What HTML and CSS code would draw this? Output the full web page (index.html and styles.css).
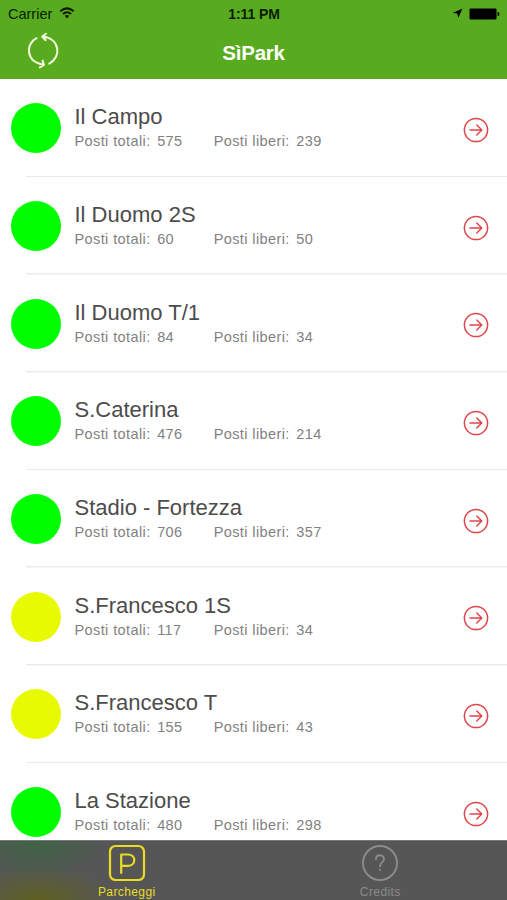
FILE: index.html
```
<!DOCTYPE html>
<html lang="it">
<head>
<meta charset="utf-8">
<title>SìPark</title>
<link rel="stylesheet" href="styles.css">
</head>
<body>
<svg class="defs" width="0" height="0" aria-hidden="true">
  <symbol id="go" viewBox="0 0 26 26">
    <circle cx="13" cy="13" r="11.6"/>
    <path d="M7 13H18.6M13.8 8L18.8 13L13.8 18"/>
  </symbol>
</svg>
<div class="app">
  <header class="header">
    <div class="status">
      <div class="carrier">
        <span>Carrier</span>
        <svg class="wifi" width="16" height="12" viewBox="0 0 16 12">
          <path d="M1.3 4.3Q8 -1.6 14.7 4.3M3.9 7Q8 3.4 12.1 7"/>
          <path class="solid" d="M5.7 8.8Q8 7 10.3 8.8L8 11.4Z"/>
        </svg>
      </div>
      <span class="clock">1:11 PM</span>
      <div class="indicators">
        <svg width="11" height="11" viewBox="0 0 11 11"><path d="M10.5 .5L6.2 10L5.4 5.6L.6 5Z"/></svg>
        <svg width="31" height="12" viewBox="0 0 31 12"><rect x=".5" y=".5" width="27" height="11" rx="1"/><path d="M28.5 4Q30.5 4 30.5 6T28.5 8Z"/></svg>
      </div>
    </div>
    <div class="navbar">
      <svg class="refresh" width="34" height="38" viewBox="0 0 34 38">
        <path d="M10.6 6.2C-.8 11.5 -.5 30 17.6 32.8M16.6 28.6L18 32.8L13.8 35.4M23.2 31.6C35.5 25.5 34.5 6.5 16.6 4.6M20 1.8L16.2 4.5L19.6 8.2"/>
      </svg>
      <h1 class="title">SìPark</h1>
    </div>
  </header>
  <main class="list">
    <div class="row"><i class="dot"></i><div class="info"><h2>Il Campo</h2><p><span class="label">Posti totali:</span><span class="total">575</span><span class="label">Posti liberi:</span><span>239</span></p></div><svg class="go"><use href="#go"/></svg></div>
    <div class="row"><i class="dot"></i><div class="info"><h2>Il Duomo 2S</h2><p><span class="label">Posti totali:</span><span class="total">60</span><span class="label">Posti liberi:</span><span>50</span></p></div><svg class="go"><use href="#go"/></svg></div>
    <div class="row"><i class="dot"></i><div class="info"><h2>Il Duomo T/1</h2><p><span class="label">Posti totali:</span><span class="total">84</span><span class="label">Posti liberi:</span><span>34</span></p></div><svg class="go"><use href="#go"/></svg></div>
    <div class="row"><i class="dot"></i><div class="info"><h2>S.Caterina</h2><p><span class="label">Posti totali:</span><span class="total">476</span><span class="label">Posti liberi:</span><span>214</span></p></div><svg class="go"><use href="#go"/></svg></div>
    <div class="row"><i class="dot"></i><div class="info"><h2>Stadio - Fortezza</h2><p><span class="label">Posti totali:</span><span class="total">706</span><span class="label">Posti liberi:</span><span>357</span></p></div><svg class="go"><use href="#go"/></svg></div>
    <div class="row"><i class="dot busy"></i><div class="info"><h2>S.Francesco 1S</h2><p><span class="label">Posti totali:</span><span class="total">117</span><span class="label">Posti liberi:</span><span>34</span></p></div><svg class="go"><use href="#go"/></svg></div>
    <div class="row"><i class="dot busy"></i><div class="info"><h2>S.Francesco T</h2><p><span class="label">Posti totali:</span><span class="total">155</span><span class="label">Posti liberi:</span><span>43</span></p></div><svg class="go"><use href="#go"/></svg></div>
    <div class="row"><i class="dot"></i><div class="info"><h2>La Stazione</h2><p><span class="label">Posti totali:</span><span class="total">480</span><span class="label">Posti liberi:</span><span>298</span></p></div><svg class="go"><use href="#go"/></svg></div>
  </main>
  <nav class="tabs">
    <div class="tab active">
      <svg width="38" height="38" viewBox="0 0 38 38"><rect x="2" y="2" width="34" height="34" rx="5.5"/><path d="M13.2 29V10.5H20C28.3 10.5 28.3 21.8 20 21.8H13.2"/></svg>
      <span>Parcheggi</span>
    </div>
    <div class="tab">
      <svg width="38" height="38" viewBox="0 0 38 38"><circle cx="19" cy="19" r="17"/><path d="M15 15.3C15 10 23 10 23 15.1C23 18.3 19 18.5 19 22.2M19 25.8V26"/></svg>
      <span>Credits</span>
    </div>
  </nav>
</div>
</body>
</html>
```
FILE: styles.css
```
* { box-sizing: border-box; }
body {
  margin: 0;
  background: #fff;
  font-family: "Liberation Sans", Arial, sans-serif;
}
h1, h2, p { margin: 0; font-weight: normal; }
svg { display: block; fill: none; stroke-linecap: round; stroke-linejoin: round; }
.defs { position: absolute; }
.app {
  width: 507px;
  height: 900px;
  display: flex;
  flex-direction: column;
  overflow: hidden;
}
.header { height: 79px; flex: none; background: #58ab1e; }
.status {
  height: 27px;
  padding: 1px 7px 0 8px;
  display: grid;
  grid-template-columns: 1fr auto 1fr;
  align-items: center;
  color: #0c1c04;
  font-size: 14.5px;
}
.carrier { display: flex; align-items: center; gap: 7px; }
.wifi { stroke: #0c1c04; stroke-width: 2; stroke-linecap: butt; margin-top: -2px; }
.wifi .solid { fill: #0c1c04; stroke: none; }
.clock { font-size: 14px; font-weight: bold; letter-spacing: -.1px; }
.indicators { display: flex; justify-content: flex-end; align-items: center; gap: 6px; }
.indicators svg { fill: #000; margin-top: -1px; }
.navbar {
  height: 52px;
  padding: 0 26px;
  display: grid;
  grid-template-columns: 1fr auto 1fr;
}
.refresh { stroke: #f1fbdc; stroke-width: 2; margin-top: 5px; }
.title { color: #fff; font-size: 20.5px; line-height: 52px; font-weight: bold; letter-spacing: -.2px; }
.list { flex: 1; min-height: 0; overflow: hidden; padding-top: .5px; }
.row {
  height: 97.7px;
  padding: 0 18px 0 11px;
  display: flex;
  align-items: center;
  background: linear-gradient(#ebebeb, #ebebeb) 26px 100% / 100% 1.5px no-repeat;
}
.dot { width: 50px; height: 50px; flex: none; border-radius: 50%; background: #00fe00; }
.dot.busy { background: #e8fa00; }
.info { flex: 1; margin-left: 13.5px; }
.info h2 { color: #4c4c4c; font-size: 22px; line-height: 26px; }
.info p {
  display: flex;
  color: #818181;
  font-size: 14.5px;
  line-height: 22px;
  letter-spacing: .4px;
}
.label { margin-right: 6.5px; }
.total { width: 56.5px; }
.go { width: 26px; height: 26px; margin-top: 3px; stroke: #df4549; stroke-width: 1.5; }
.tabs {
  height: 60px;
  flex: none;
  display: grid;
  grid-template-columns: 1fr 1fr;
  border-top: 1px solid #777;
  background:
    radial-gradient(ellipse 70px 40px at 36px 0, #3f6345, transparent),
    radial-gradient(ellipse 75px 36px at 38px 60px, #5f6120, transparent),
    #565656;
}
.tab {
  padding-top: 3px;
  display: flex;
  flex-direction: column;
  align-items: center;
  color: #8b8b8b;
  font-size: 12px;
  line-height: 14px;
  letter-spacing: .4px;
}
.tab span { margin-top: 3px; }
.tab svg { stroke: #8b8b8b; stroke-width: 1.9; }
.tab.active { color: #e9dc23; }
.tab.active svg { stroke: #e9dc23; stroke-width: 2.2; }
```
